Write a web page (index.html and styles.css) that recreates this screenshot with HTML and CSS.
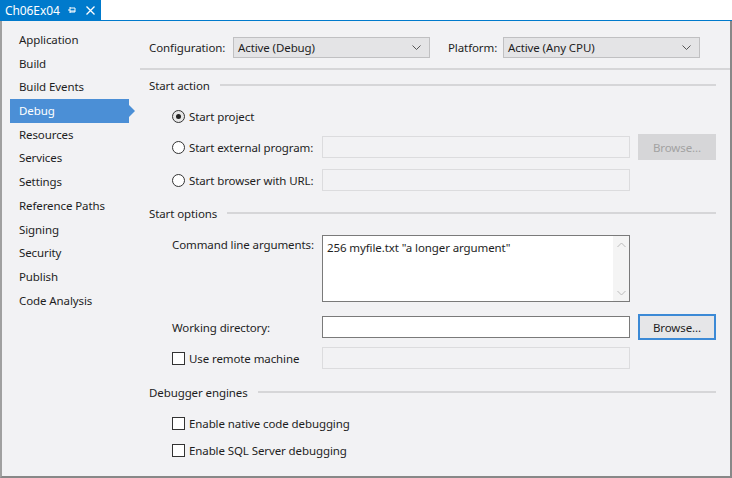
FILE: index.html
```html
<!DOCTYPE html>
<html>
<head>
<meta charset="utf-8">
<link rel="stylesheet" href="styles.css">
</head>
<body>
<div class="window">
  <div class="tabstrip">
    <div class="tab">
      <span class="tab-title">Ch06Ex04</span>
      <svg class="pin" width="10" height="10" viewBox="0 0 10 10"><path d="M1 5 H3 M3 2 V8 M3 3 H8 V7 H3 M3 6 H8" stroke="#fff" stroke-width="1" fill="none"/></svg>
      <svg class="close" width="9" height="9" viewBox="0 0 9 9"><path d="M0.5 0.5 L8.5 8.5 M8.5 0.5 L0.5 8.5" stroke="#fff" stroke-width="1.3"/></svg>
    </div>
  </div>
  <div class="body">
    <nav class="sidebar">
      <div class="nav-item">Application</div>
      <div class="nav-item">Build</div>
      <div class="nav-item">Build Events</div>
      <div class="nav-item active">Debug</div>
      <div class="nav-item">Resources</div>
      <div class="nav-item">Services</div>
      <div class="nav-item">Settings</div>
      <div class="nav-item">Reference Paths</div>
      <div class="nav-item">Signing</div>
      <div class="nav-item">Security</div>
      <div class="nav-item">Publish</div>
      <div class="nav-item">Code Analysis</div>
    </nav>
    <main class="content">
      <div class="configbar">
        <span class="cfg-label">Configuration:</span>
        <div class="select sel-config"><span>Active (Debug)</span><svg class="chev" width="9" height="6" viewBox="0 0 9 6"><path d="M0.5 0.5 L4.5 4.5 L8.5 0.5" stroke="#555" fill="none"/></svg></div>
        <span class="cfg-label plat-label">Platform:</span>
        <div class="select sel-plat"><span>Active (Any CPU)</span><svg class="chev" width="9" height="6" viewBox="0 0 9 6"><path d="M0.5 0.5 L4.5 4.5 L8.5 0.5" stroke="#555" fill="none"/></svg></div>
      </div>

      <div class="heading h-start-action"><span>Start action</span><div class="rule"></div></div>
      <div class="row r-project">
        <span class="radio checked"></span><span class="opt-label">Start project</span>
      </div>
      <div class="row r-external">
        <span class="radio"></span><span class="opt-label lbl-col2">Start external program:</span>
        <div class="input disabled"></div>
        <div class="button disabled">Browse...</div>
      </div>
      <div class="row r-browser">
        <span class="radio"></span><span class="opt-label lbl-col2">Start browser with URL:</span>
        <div class="input disabled"></div>
      </div>

      <div class="heading h-start-options"><span>Start options</span><div class="rule"></div></div>
      <div class="row r-cmd">
        <span class="field-label">Command line arguments:</span>
        <div class="textarea">
          <span class="ta-text">256 myfile.txt "a longer argument"</span>
          <div class="ta-scroll">
            <svg width="9" height="6" viewBox="0 0 9 6"><path d="M0.5 5 L4.5 1 L8.5 5" stroke="#bbb" fill="none"/></svg>
            <svg width="9" height="6" viewBox="0 0 9 6"><path d="M0.5 1 L4.5 5 L8.5 1" stroke="#bbb" fill="none"/></svg>
          </div>
        </div>
      </div>
      <div class="row r-workdir">
        <span class="field-label">Working directory:</span>
        <div class="input active"></div>
        <div class="button focused">Browse...</div>
      </div>
      <div class="row r-remote">
        <span class="checkbox"></span><span class="opt-label lbl-col2">Use remote machine</span>
        <div class="input disabled"></div>
      </div>

      <div class="heading h-engines"><span>Debugger engines</span><div class="rule"></div></div>
      <div class="row r-native">
        <span class="checkbox"></span><span class="opt-label">Enable native code debugging</span>
      </div>
      <div class="row r-sql">
        <span class="checkbox"></span><span class="opt-label">Enable SQL Server debugging</span>
      </div>
    </main>
  </div>
</div>
</body>
</html>
```

FILE: styles.css
```css
* { box-sizing: border-box; }
html, body { margin: 0; padding: 0; }
body {
  width: 732px;
  height: 478px;
  overflow: hidden;
  font-family: "Noto Sans", "Open Sans", sans-serif;
  font-size: 11.5px;
  letter-spacing: -0.1px;
  color: #1e1e1e;
  background: #fff;
}
.window {
  width: 732px;
  height: 478px;
  display: flex;
  flex-direction: column;
}
.tabstrip {
  height: 21px;
  background: #fff;
  display: flex;
  border-bottom: 1px solid #007acc;
}
.tab {
  width: 101px;
  height: 20px;
  background: #007acc;
  color: #fff;
  display: flex;
  align-items: center;
  padding-left: 5px;
  font-size: 12px;
}
.tab-title { width: 62px; }
.close { margin-left: 9px; }
.body {
  flex: 1;
  display: flex;
  background: #f2f2f4;
  border-left: 2px solid #a0a0a0;
  border-right: 2px solid #888;
  border-bottom: 2px solid #888;
  padding-top: 1px;
}
.sidebar {
  width: 138px;
  padding-top: 6px;
  display: flex;
  flex-direction: column;
}
.nav-item {
  height: 23.7px;
  line-height: 23.7px;
  padding-left: 17px;
  white-space: nowrap;
}
.nav-item.active {
  margin-left: 8px;
  width: 119px;
  padding-left: 9px;
  background: #4b8fd6;
  color: #fff;
  position: relative;
}
.nav-item.active::after {
  content: "";
  position: absolute;
  right: -6px;
  top: 6px;
  border-top: 6px solid transparent;
  border-bottom: 6px solid transparent;
  border-left: 6px solid #4b8fd6;
}
.content {
  flex: 1;
  display: flex;
  flex-direction: column;
}
.configbar {
  display: flex;
  align-items: center;
  padding: 15px 0 10px 9px;
  border-bottom: 2px solid #d6d6d8;
  height: 48px;
}
.cfg-label { width: 84px; }
.plat-label { width: 55px; margin-left: 18px; }
.select {
  width: 197px;
  height: 21px;
  background: #e4e4e6;
  border: 1px solid #c0c0c2;
  display: flex;
  align-items: center;
  justify-content: space-between;
  padding: 0 8px 0 4px;
}
.heading {
  display: flex;
  align-items: center;
  height: 16px;
  padding-left: 9px;
  padding-right: 14px;
}
.heading span { white-space: nowrap; }
.rule {
  flex: 1;
  height: 2px;
  background: #d6d6d8;
  margin-left: 10px;
}
.h-start-action { margin-top: 7px; }
.h-start-options { margin-top: 12px; }
.h-engines { margin-top: 13px; }
.row {
  display: flex;
  align-items: center;
  height: 26px;
  padding-left: 32px;
}
.r-project { margin-top: 10px; }
.r-external { margin-top: 5px; }
.r-browser { margin-top: 7px; }
.r-cmd { margin-top: 14px; height: 67px; align-items: flex-start; }
.r-workdir { margin-top: 12px; }
.r-remote { margin-top: 5px; }
.r-native { margin-top: 10px; }
.r-sql { margin-top: 1px; }
.radio {
  width: 13px;
  height: 13px;
  border: 1px solid #333;
  border-radius: 50%;
  background: #fff;
  margin-right: 4px;
  position: relative;
  flex: none;
}
.radio.checked { background: #e6e6e6; }
.radio.checked::after {
  content: "";
  position: absolute;
  left: 3px; top: 3px;
  width: 5px; height: 5px;
  border-radius: 50%;
  background: #222;
}
.checkbox {
  width: 13px;
  height: 13px;
  border: 1px solid #333;
  background: #fff;
  margin-right: 4px;
  flex: none;
}
.opt-label { white-space: nowrap; }
.lbl-col2 { width: 133px; }
.field-label { width: 150px; white-space: nowrap; }
.r-cmd .field-label { padding-top: 2px; }
.input {
  width: 308px;
  height: 22px;
}
.input.disabled {
  border: 1px solid #dcdcde;
  background: #f2f2f4;
}
.input.active {
  border: 1px solid #7a7a7a;
  background: #fff;
}
.button {
  width: 78px;
  height: 26px;
  margin-left: 8px;
  display: flex;
  align-items: center;
  justify-content: center;
}
.button.disabled {
  background: #d6d6d8;
  color: #a2a2a2;
}
.button.focused {
  background: #e6e6e8;
  border: 2px solid #3c8ad6;
  color: #1e1e1e;
}
.textarea {
  width: 308px;
  height: 67px;
  background: #fff;
  border: 1px solid #7a7a7a;
  display: flex;
  justify-content: space-between;
}
.ta-text { padding: 4px 0 0 4px; white-space: nowrap; }
.ta-scroll {
  width: 16px;
  background: #f4f4f4;
  display: flex;
  flex-direction: column;
  justify-content: space-between;
  align-items: center;
  padding: 6px 0 5px;
}
```
